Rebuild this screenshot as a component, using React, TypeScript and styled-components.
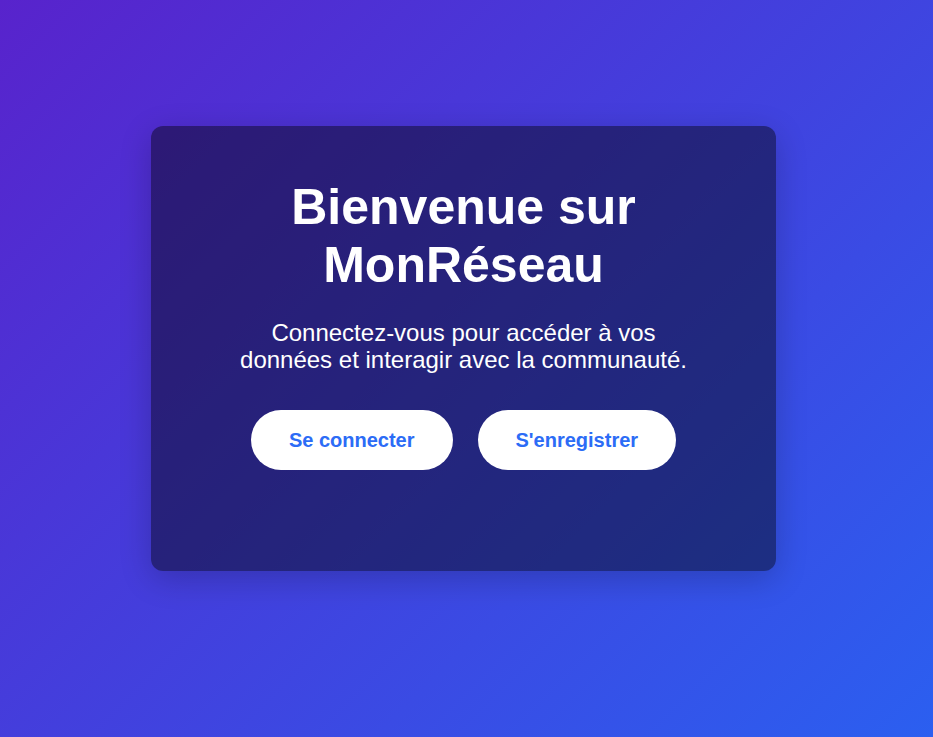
import React from "react";
import styled, { createGlobalStyle } from "styled-components";

const GlobalStyle = createGlobalStyle`
  html, body {
    margin: 0;
    padding: 0;
  }
  body {
    font-family: "Liberation Sans", Arial, sans-serif;
    background: linear-gradient(135deg, #5823cc 0%, #2b5ff0 100%);
    min-height: 100vh;
  }
`;

function App() {
  return (
    <>
      <GlobalStyle />
      <Page>
        <Card>
          <Title>Bienvenue sur MonRéseau</Title>
          <Subtitle>
            Connectez-vous pour accéder à vos données et interagir avec la
            communauté.
          </Subtitle>
          <Actions>
            <PillButton>Se connecter</PillButton>
            <PillButton>S'enregistrer</PillButton>
          </Actions>
        </Card>
      </Page>
    </>
  );
}

const Page = styled.div`
  min-height: 100vh;
  box-sizing: border-box;
  display: flex;
  align-items: flex-start;
  padding: 126px 0 0 151px;
`;

const Card = styled.div`
  width: 625px;
  height: 445px;
  box-sizing: border-box;
  padding: 52px 40px;
  border-radius: 12px;
  background: rgba(0, 0, 0, 0.44);
  box-shadow: 0 8px 32px rgba(0, 0, 0, 0.2);
  color: #fff;
  display: flex;
  flex-direction: column;
  align-items: center;
  text-align: center;
`;

const Title = styled.h1`
  margin: 0;
  max-width: 480px;
  font-size: 50px;
  line-height: 58px;
  font-weight: 700;
`;

const Subtitle = styled.p`
  margin: 25px 0 0;
  max-width: 460px;
  font-size: 24px;
  line-height: 27px;
`;

const Actions = styled.div`
  margin-top: 37px;
  display: flex;
  gap: 25px;
`;

const PillButton = styled.button`
  border: none;
  background: #fff;
  color: #2c6cf6;
  font-family: "Liberation Sans", Arial, sans-serif;
  font-size: 20px;
  font-weight: 700;
  line-height: 24px;
  padding: 18px 38px;
  border-radius: 30px;
  cursor: pointer;
`;

export default App;
